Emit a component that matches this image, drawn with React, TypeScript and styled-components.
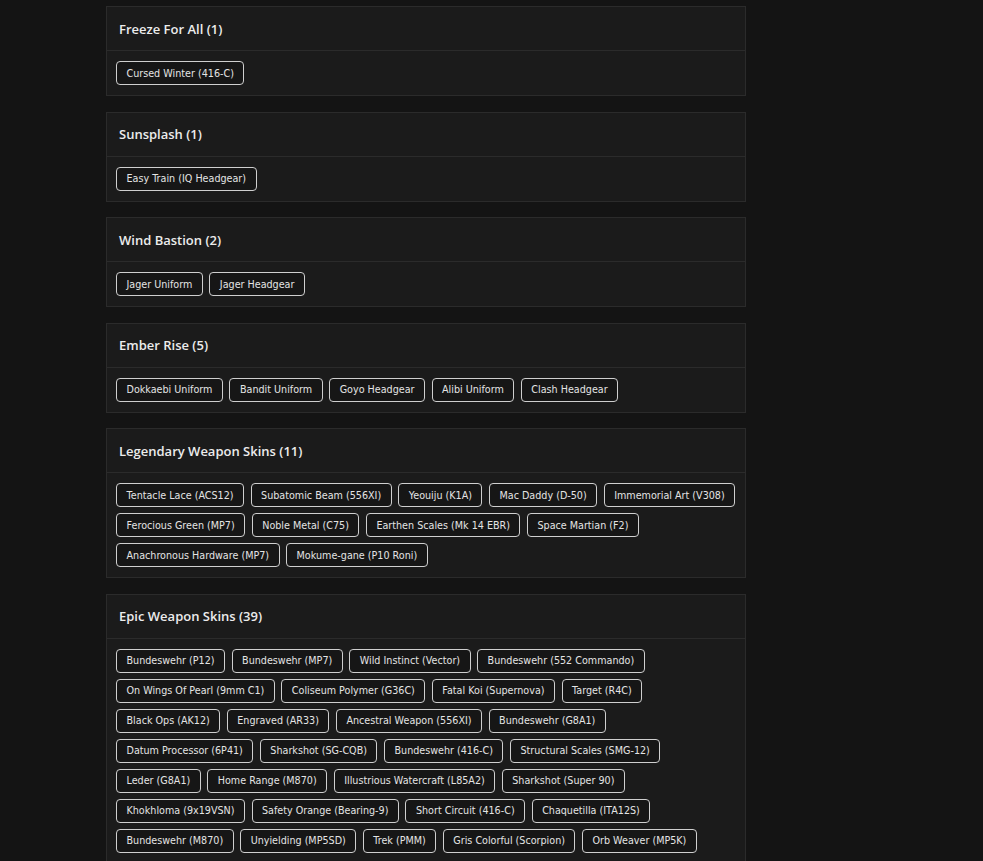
import styled, { createGlobalStyle } from "styled-components";

const GlobalStyle = createGlobalStyle`
  html, body {
    margin: 0;
    padding: 0;
    background: #141414;
    color: #e6e6e6;
    font-family: "Open Sans", "Liberation Sans", sans-serif;
  }
`;

const Page = styled.main`
  display: flex;
  flex-direction: column;
  gap: 15.5px;
  width: 640px;
  margin-left: 106px;
  padding-top: 6px;
`;

const Card = styled.section`
  background: #1b1b1b;
  border: 1px solid #2b2b2b;
`;

const Header = styled.h2`
  margin: 0;
  height: 43px;
  display: flex;
  align-items: center;
  padding: 0 12px;
  font-size: 13px;
  font-weight: 600;
  color: #ececec;
  border-bottom: 1px solid #2b2b2b;
`;

const Body = styled.div`
  display: flex;
  flex-wrap: wrap;
  gap: 6px 6.5px;
  padding: 10px 9px;
`;

const Chip = styled.span`
  display: inline-flex;
  align-items: center;
  height: 24px;
  padding: 0 9.5px;
  box-sizing: border-box;
  border: 1px solid #cfcfcf;
  border-radius: 4px;
  background: #161616;
  font-family: "DejaVu Sans", "Open Sans", sans-serif;
  font-size: 9.6px;
  color: #e4e4e4;
  white-space: nowrap;
`;

const groups: { title: string; count: number; items: string[] }[] = [
  { title: "Freeze For All", count: 1, items: ["Cursed Winter (416-C)"] },
  { title: "Sunsplash", count: 1, items: ["Easy Train (IQ Headgear)"] },
  { title: "Wind Bastion", count: 2, items: ["Jager Uniform", "Jager Headgear"] },
  {
    title: "Ember Rise",
    count: 5,
    items: ["Dokkaebi Uniform", "Bandit Uniform", "Goyo Headgear", "Alibi Uniform", "Clash Headgear"],
  },
  {
    title: "Legendary Weapon Skins",
    count: 11,
    items: [
      "Tentacle Lace (ACS12)",
      "Subatomic Beam (556XI)",
      "Yeouiju (K1A)",
      "Mac Daddy (D-50)",
      "Immemorial Art (V308)",
      "Ferocious Green (MP7)",
      "Noble Metal (C75)",
      "Earthen Scales (Mk 14 EBR)",
      "Space Martian (F2)",
      "Anachronous Hardware (MP7)",
      "Mokume-gane (P10 Roni)",
    ],
  },
  {
    title: "Epic Weapon Skins",
    count: 39,
    items: [
      "Bundeswehr (P12)",
      "Bundeswehr (MP7)",
      "Wild Instinct (Vector)",
      "Bundeswehr (552 Commando)",
      "On Wings Of Pearl (9mm C1)",
      "Coliseum Polymer (G36C)",
      "Fatal Koi (Supernova)",
      "Target (R4C)",
      "Black Ops (AK12)",
      "Engraved (AR33)",
      "Ancestral Weapon (556XI)",
      "Bundeswehr (G8A1)",
      "Datum Processor (6P41)",
      "Sharkshot (SG-CQB)",
      "Bundeswehr (416-C)",
      "Structural Scales (SMG-12)",
      "Leder (G8A1)",
      "Home Range (M870)",
      "Illustrious Watercraft (L85A2)",
      "Sharkshot (Super 90)",
      "Khokhloma (9x19VSN)",
      "Safety Orange (Bearing-9)",
      "Short Circuit (416-C)",
      "Chaquetilla (ITA12S)",
      "Bundeswehr (M870)",
      "Unyielding (MP5SD)",
      "Trek (PMM)",
      "Gris Colorful (Scorpion)",
      "Orb Weaver (MP5K)",
    ],
  },
];

export default function App() {
  return (
    <>
      <GlobalStyle />
      <Page>
        {groups.map((g) => (
          <Card key={g.title}>
            <Header>
              {g.title} ({g.count})
            </Header>
            <Body>
              {g.items.map((item) => (
                <Chip key={item}>{item}</Chip>
              ))}
            </Body>
          </Card>
        ))}
      </Page>
    </>
  );
}
